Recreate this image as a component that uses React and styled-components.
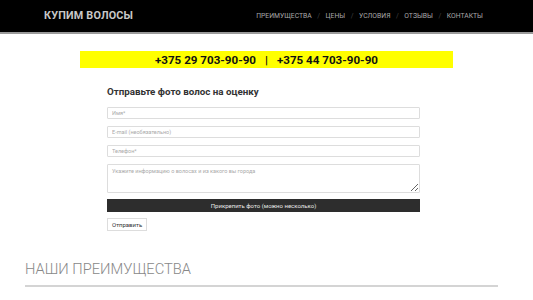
import React from 'react';
import styled, { createGlobalStyle } from 'styled-components';

const GlobalStyle = createGlobalStyle`
    body {
        margin: 0;
        font-family: Roboto, "Liberation Sans", sans-serif;
        background: #fff;
    }
`

const Header = styled.header`
    height: 32px;
    background: #000;
    border-bottom: 2px solid #9a9a9a;
    display: flex;
    align-items: center;
    justify-content: space-between;
    padding: 0 50px 0 44px;
`

const Logo = styled.div`
    color: #c8c8c8;
    font-size: 10.8px;
    font-weight: 700;
    letter-spacing: 0.2px;
    margin-top: -2px;
`

const Nav = styled.nav`
    display: flex;
    align-items: center;
    gap: 5.5px;
    font-size: 6.8px;
    text-transform: uppercase;
    color: #a8a8a8;
`

const Sep = styled.span`
    color: #444;
`

const Phones = styled.div`
    margin: 17px 80px 0;
    height: 17px;
    background: #ffff00;
    display: flex;
    align-items: center;
    justify-content: center;
    gap: 9px;
    font-size: 11.6px;
    font-weight: 700;
    color: #111;
`

const Form = styled.form`
    margin: 0 113px 0 107px;
    display: flex;
    flex-direction: column;
    padding-top: 18px;
`

const Title = styled.h2`
    margin: 0 0 10px;
    font-size: 9.8px;
    font-weight: 700;
    color: #333;
`

const Field = styled.input`
    height: 12px;
    box-sizing: border-box;
    border: 1px solid #ddd;
    border-radius: 1px;
    padding: 0 4px;
    font-family: inherit;
    font-size: 5.5px;
    margin-bottom: 7px;
    outline: none;
    &::placeholder { color: #aaa; }
`

const Area = styled.textarea`
    height: 29px;
    box-sizing: border-box;
    border: 1px solid #ddd;
    border-radius: 1px;
    padding: 3px 4px;
    font-family: inherit;
    font-size: 5.5px;
    margin: 0 0 6px;
    resize: vertical;
    outline: none;
    &::placeholder { color: #aaa; }
`

const Attach = styled.div`
    height: 13px;
    background: #2d2d2d;
    color: #e8e8e8;
    font-size: 6px;
    display: flex;
    align-items: center;
    justify-content: center;
    margin-bottom: 6px;
`

const Submit = styled.button`
    align-self: flex-start;
    height: 13px;
    padding: 0 4px;
    background: #fff;
    border: 1px solid #ddd;
    font-family: inherit;
    font-size: 6px;
    color: #333;
`

const Section = styled.section`
    margin: 29px 35px 0 25px;
`

const SectionTitle = styled.h3`
    margin: 0;
    font-size: 14.7px;
    font-weight: 300;
    color: #888;
    padding-bottom: 7px;
    border-bottom: 2px solid #d4d4d4;
`

const Cards = styled.div`
    display: grid;
    grid-template-columns: 151px 151px 122px;
    column-gap: 10px;
    margin-top: 14px;
    justify-content: space-between;
`

const Card = styled.div`
    height: 4px;
    border-top: 1px solid ${p => p.$line};
`

const navItems = ['Преимущества', 'Цены', 'Условия', 'Отзывы', 'Контакты']

function App() {
    return (
        <>
            <GlobalStyle />
            <Header>
                <Logo>КУПИМ ВОЛОСЫ</Logo>
                <Nav>
                    {navItems.map((item, i) => (
                        <React.Fragment key={item}>
                            {i > 0 && <Sep>/</Sep>}
                            <span>{item}</span>
                        </React.Fragment>
                    ))}
                </Nav>
            </Header>
            <Phones>
                <span>+375 29 703-90-90</span>
                <span>|</span>
                <span>+375 44 703-90-90</span>
            </Phones>
            <Form onSubmit={e => e.preventDefault()}>
                <Title>Отправьте фото волос на оценку</Title>
                <Field placeholder="Имя*" />
                <Field placeholder="E-mail (необязательно)" />
                <Field placeholder="Телефон*" />
                <Area placeholder="Укажите информацию о волосах и из какого вы города" />
                <Attach>Прикрепить фото (можно несколько)</Attach>
                <Submit type="submit">Отправить</Submit>
            </Form>
            <Section>
                <SectionTitle>НАШИ ПРЕИМУЩЕСТВА</SectionTitle>
                <Cards>
                    <Card $line="#f4f4f4" />
                    <Card $line="#cfcfcf" />
                    <Card $line="#d8cfcf" />
                </Cards>
            </Section>
        </>
    );
}

export default App;
